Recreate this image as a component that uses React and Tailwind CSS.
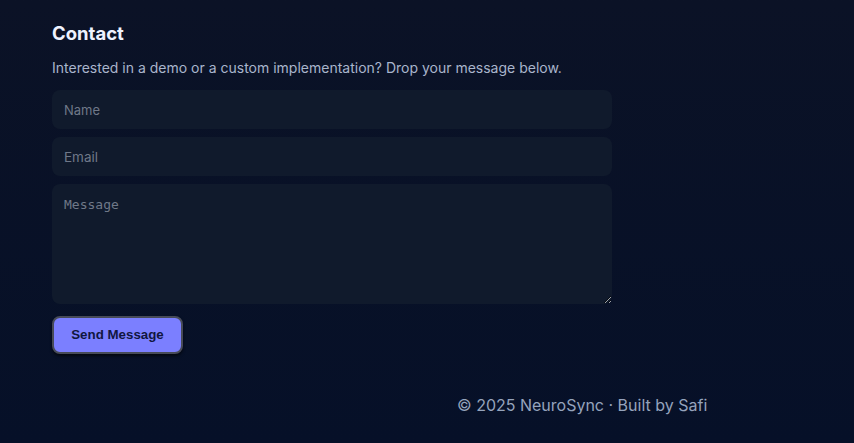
import React from "react";

export default function App() {
  return (
    <div className="min-h-[443px] w-full bg-gradient-to-b from-[#0b1226] to-[#061028] font-['Inter',sans-serif] relative">
      <section className="pl-[52px] pt-[21px] w-[612px]">
        <h2 className="text-[18.5px] leading-[24px] font-bold text-[#eef2ff]">Contact</h2>
        <p className="mt-[13px] text-[14px] leading-[20px] text-[#a9b5cc]">
          Interested in a demo or a custom implementation? Drop your message below.
        </p>
        <form className="mt-[12px] flex flex-col gap-[8px]" onSubmit={(e) => e.preventDefault()}>
          <input
            placeholder="Name"
            className="h-[39px] w-[560px] rounded-[8px] bg-[#101a2c] px-[12px] text-[13px] text-[#e5e7eb] placeholder-[#6f7888] outline-none font-['Inter',sans-serif]"
          />
          <input
            placeholder="Email"
            className="h-[39px] w-[560px] rounded-[8px] bg-[#101a2c] px-[12px] text-[13.5px] text-[#e5e7eb] placeholder-[#6f7888] outline-none font-['Inter',sans-serif]"
          />
          <textarea
            placeholder="Message"
            className="h-[120px] w-[560px] rounded-[8px] bg-[#101a2c] px-[12px] py-[11px] text-[13px] text-[#e5e7eb] placeholder-[#6f7888] outline-none font-['DejaVu_Sans_Mono',monospace]"
          />
          <div className="mt-[4px]">
            <button
              type="submit"
              className="h-[38px] w-[131px] rounded-[8px] border-2 border-[#474b58] bg-[#7b7fff] text-[13.333px] font-bold text-[#111640] font-['Liberation_Sans',Arial,sans-serif] shadow-[0_2px_3px_rgba(0,0,0,0.6)]"
            >
              Send Message
            </button>
          </div>
        </form>
      </section>
      <footer className="mt-[41px] pl-[457px] text-[16px] leading-[20px] text-[#95a3bc]">
        © 2025 NeuroSync · Built by Safi
      </footer>
    </div>
  );
}
